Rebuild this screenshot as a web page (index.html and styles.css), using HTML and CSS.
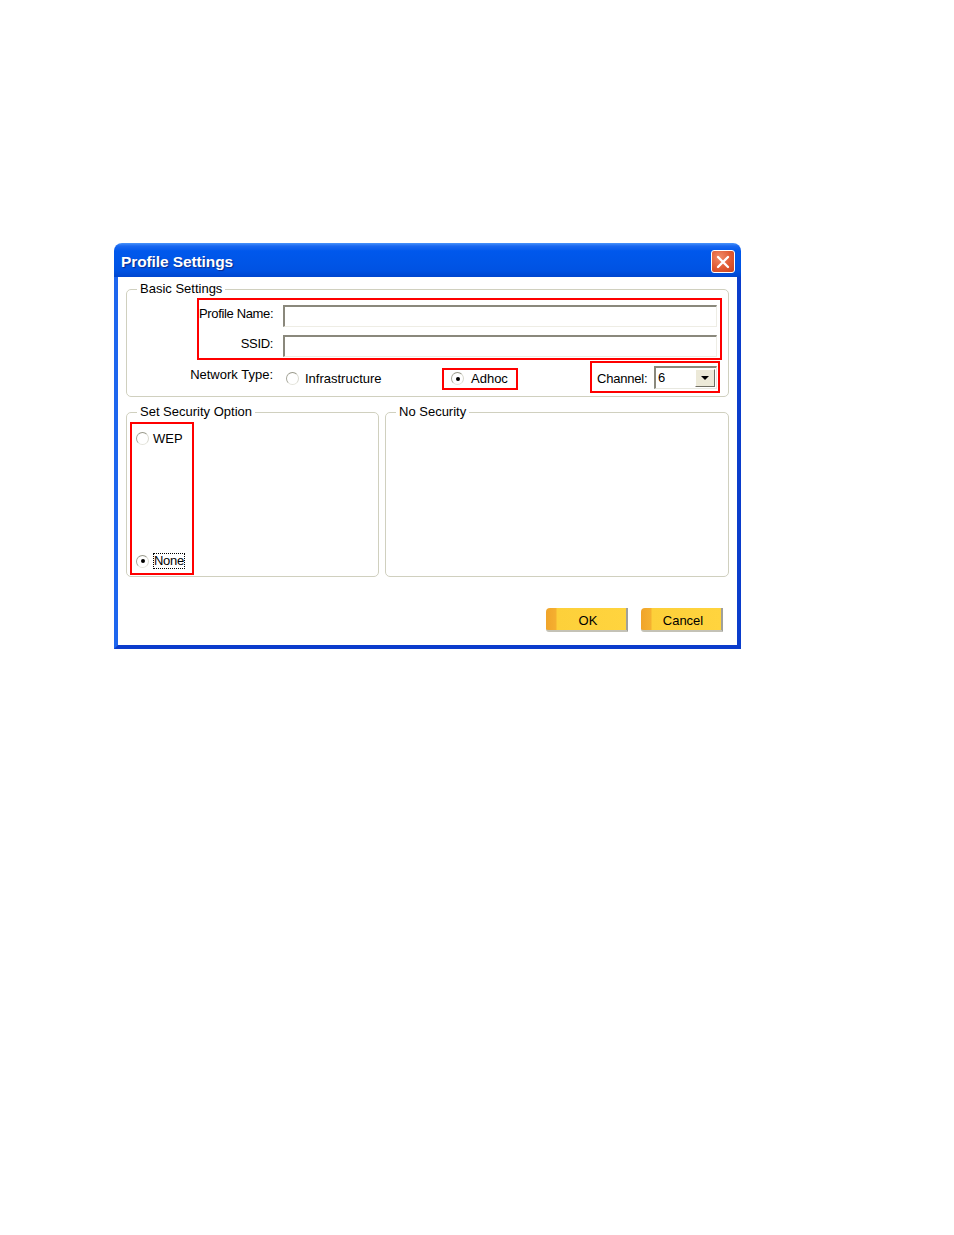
FILE: index.html
```html
<!DOCTYPE html>
<html>
<head>
<meta charset="utf-8">
<title>Profile Settings</title>
<link rel="stylesheet" href="styles.css">
</head>
<body>
<div class="page">
  <div class="dialog">
    <div class="titlebar">
      <span class="title">Profile Settings</span>
      <span class="close">
        <svg width="14" height="14" viewBox="0 0 14 14"><path d="M2 2 L12 12 M12 2 L2 12" stroke="#fff" stroke-width="2.4" stroke-linecap="round"/></svg>
      </span>
    </div>
    <div class="frame">
      <div class="client">
        <fieldset class="group basic">
          <legend>Basic Settings</legend>
          <div class="redbox names">
            <div class="field-row">
              <span class="label">Profile Name:</span>
              <span class="input"></span>
            </div>
            <div class="field-row">
              <span class="label">SSID:</span>
              <span class="input"></span>
            </div>
          </div>
          <div class="net-row">
            <span class="net-label">Network Type:</span>
            <span class="radio-item infra"><span class="radio"></span>Infrastructure</span>
            <span class="redbox adhoc"><span class="radio"><span class="dot"></span></span>Adhoc</span>
            <span class="redbox channel">
              <span class="ch-label">Channel:</span>
              <span class="select"><span class="sel-val">6</span><span class="sel-btn"><span class="tri"></span></span></span>
            </span>
          </div>
        </fieldset>
        <div class="sec-row">
          <fieldset class="group secopt">
            <legend>Set Security Option</legend>
            <div class="redbox secbox">
              <span class="radio-item"><span class="radio"></span>WEP</span>
              <span class="radio-item"><span class="radio"><span class="dot"></span></span><span class="focus">None</span></span>
            </div>
          </fieldset>
          <fieldset class="group nosec">
            <legend>No Security</legend>
          </fieldset>
        </div>
        <div class="buttons">
          <span class="btn">OK</span>
          <span class="btn">Cancel</span>
        </div>
      </div>
    </div>
  </div>
</div>
</body>
</html>
```
FILE: styles.css
```css
html, body {
  margin: 0;
  padding: 0;
  background: #ffffff;
}
.page {
  padding: 243px 0 0 114px;
  font-family: "Liberation Sans", Arial, sans-serif;
  font-size: 13px;
  color: #000;
}
.dialog {
  width: 627px;
}
.titlebar {
  height: 34px;
  box-sizing: border-box;
  display: flex;
  align-items: center;
  justify-content: space-between;
  padding: 0 6px 0 7px;
  border-radius: 8px 8px 0 0;
  background: linear-gradient(to bottom, #4a94fb 0px, #1a68f0 3px, #0058ec 8px, #0055e6 20px, #0052e2 28px, #0046cf 34px);
}
.title {
  color: #ffffff;
  font-weight: bold;
  font-size: 15.5px;
  letter-spacing: -0.1px;
  text-shadow: 1px 1px 1px #0a2a8a;
  margin-top: 3px;
}
.close {
  width: 22px;
  height: 21px;
  margin-top: 3px;
  border: 1px solid #ffffff;
  border-radius: 3px;
  background: radial-gradient(circle at 35% 30%, #f08a68 0%, #e05a32 55%, #c8421f 100%);
  display: flex;
  align-items: center;
  justify-content: center;
}
.frame {
  border-left: 4px solid #1e66ee;
  border-right: 4px solid #0a3dcc;
  border-bottom: 4px solid #0b3ccc;
}
.client {
  background: #ffffff;
  height: 368px;
  box-sizing: border-box;
  padding: 4px 8px 0 8px;
}
.group {
  margin: 0;
  padding: 0;
  border: 1px solid #d0d0bf;
  border-radius: 5px;
  min-width: 0;
}
.group legend {
  margin-left: 10px;
  padding: 0 3px;
  line-height: 16px;
  height: 16px;
  color: #000;
}
.basic {
  padding: 1px 0 3px 0;
}
.redbox {
  border: 2px solid #ff0000;
}
.names {
  margin-left: 70px;
  margin-right: 6px;
  padding: 5px 3px 1px 0;
  display: flex;
  flex-direction: column;
  gap: 8px;
}
.field-row {
  display: flex;
  align-items: center;
  gap: 10px;
}
.label {
  width: 74px;
  text-align: right;
  white-space: nowrap;
  margin-top: -6px;
  letter-spacing: -0.35px;
}
.input {
  flex: 1;
  height: 22px;
  box-sizing: border-box;
  border-top: 2px solid #8a887c;
  border-left: 2px solid #8a887c;
  border-right: 1px solid #eeede5;
  border-bottom: 1px solid #eeede5;
  background: #ffffff;
}
.net-row {
  margin-top: 1px;
  height: 32px;
  display: flex;
  align-items: center;
}
.net-label {
  width: 146px;
  text-align: right;
  margin-top: -6px;
}
.radio-item {
  display: flex;
  align-items: center;
  white-space: nowrap;
}
.infra {
  margin-left: 13px;
  width: 156px;
  margin-top: 3px;
}
.radio {
  width: 11px;
  height: 11px;
  border-radius: 50%;
  border: 1px solid;
  border-color: #9a9a8c #d8d8ce #e4e4dc #a4a498;
  background: #ffffff;
  margin-right: 6px;
  display: inline-flex;
  align-items: center;
  justify-content: center;
  flex: none;
}
.dot {
  width: 4px;
  height: 4px;
  border-radius: 50%;
  background: #000;
}
.adhoc {
  height: 22px;
  box-sizing: border-box;
  width: 76px;
  display: flex;
  align-items: center;
  padding-left: 7px;
  margin-top: 3px;
}
.adhoc .radio {
  margin-right: 7px;
}
.channel {
  margin-left: 72px;
  height: 32px;
  width: 130px;
  box-sizing: border-box;
  display: flex;
  align-items: center;
  padding-left: 5px;
  padding-top: 1px;
}
.ch-label {
  width: 57px;
  margin-top: 1px;
  letter-spacing: -0.2px;
}
.select {
  width: 63px;
  height: 23px;
  box-sizing: border-box;
  border-top: 2px solid #8a887c;
  border-left: 2px solid #8a887c;
  border-right: 1px solid #e8e8e0;
  border-bottom: 1px solid #e8e8e0;
  display: flex;
  align-items: stretch;
  background: #fff;
}
.sel-val {
  flex: 1;
  padding-left: 2px;
  line-height: 19px;
}
.sel-btn {
  width: 18px;
  margin: 1px 1px 1px 0;
  background: #ece9d8;
  border-right: 1px solid #716f64;
  border-bottom: 1px solid #716f64;
  border-top: 1px solid #fff;
  border-left: 1px solid #fff;
  display: flex;
  align-items: center;
  justify-content: center;
}
.tri {
  width: 0;
  height: 0;
  border-left: 4px solid transparent;
  border-right: 4px solid transparent;
  border-top: 4px solid #000;
}
.sec-row {
  margin-top: 7px;
  display: flex;
  gap: 6px;
}
.secopt {
  width: 253px;
  box-sizing: border-box;
  padding: 2px 0 1px 3px;
}
.secopt legend {
  margin-left: 7px;
}
.nosec {
  flex: 1;
}
.secbox {
  width: 64px;
  height: 153px;
  box-sizing: border-box;
  padding: 7px 0 0 4px;
  display: flex;
  flex-direction: column;
  justify-content: space-between;
  padding-bottom: 4px;
}
.secbox .radio {
  margin-right: 4px;
}
.focus {
  border: 1px dotted #000;
  line-height: 14px;
  letter-spacing: -0.3px;
}
.buttons {
  margin-top: 31px;
  padding-right: 6px;
  display: flex;
  justify-content: flex-end;
  gap: 13px;
}
.btn {
  width: 82px;
  height: 24px;
  box-sizing: border-box;
  display: flex;
  align-items: center;
  justify-content: center;
  padding-left: 4px;
  padding-top: 2px;
  border-radius: 4px 0 0 3px;
  border-right: 2px solid #a0a09a;
  border-bottom: 2px solid #c4c2b6;
  background: linear-gradient(to right, #f0a42a 0, #f5b030 10px, #fdd03a 11px, #ffd43e 100%);
}
```
